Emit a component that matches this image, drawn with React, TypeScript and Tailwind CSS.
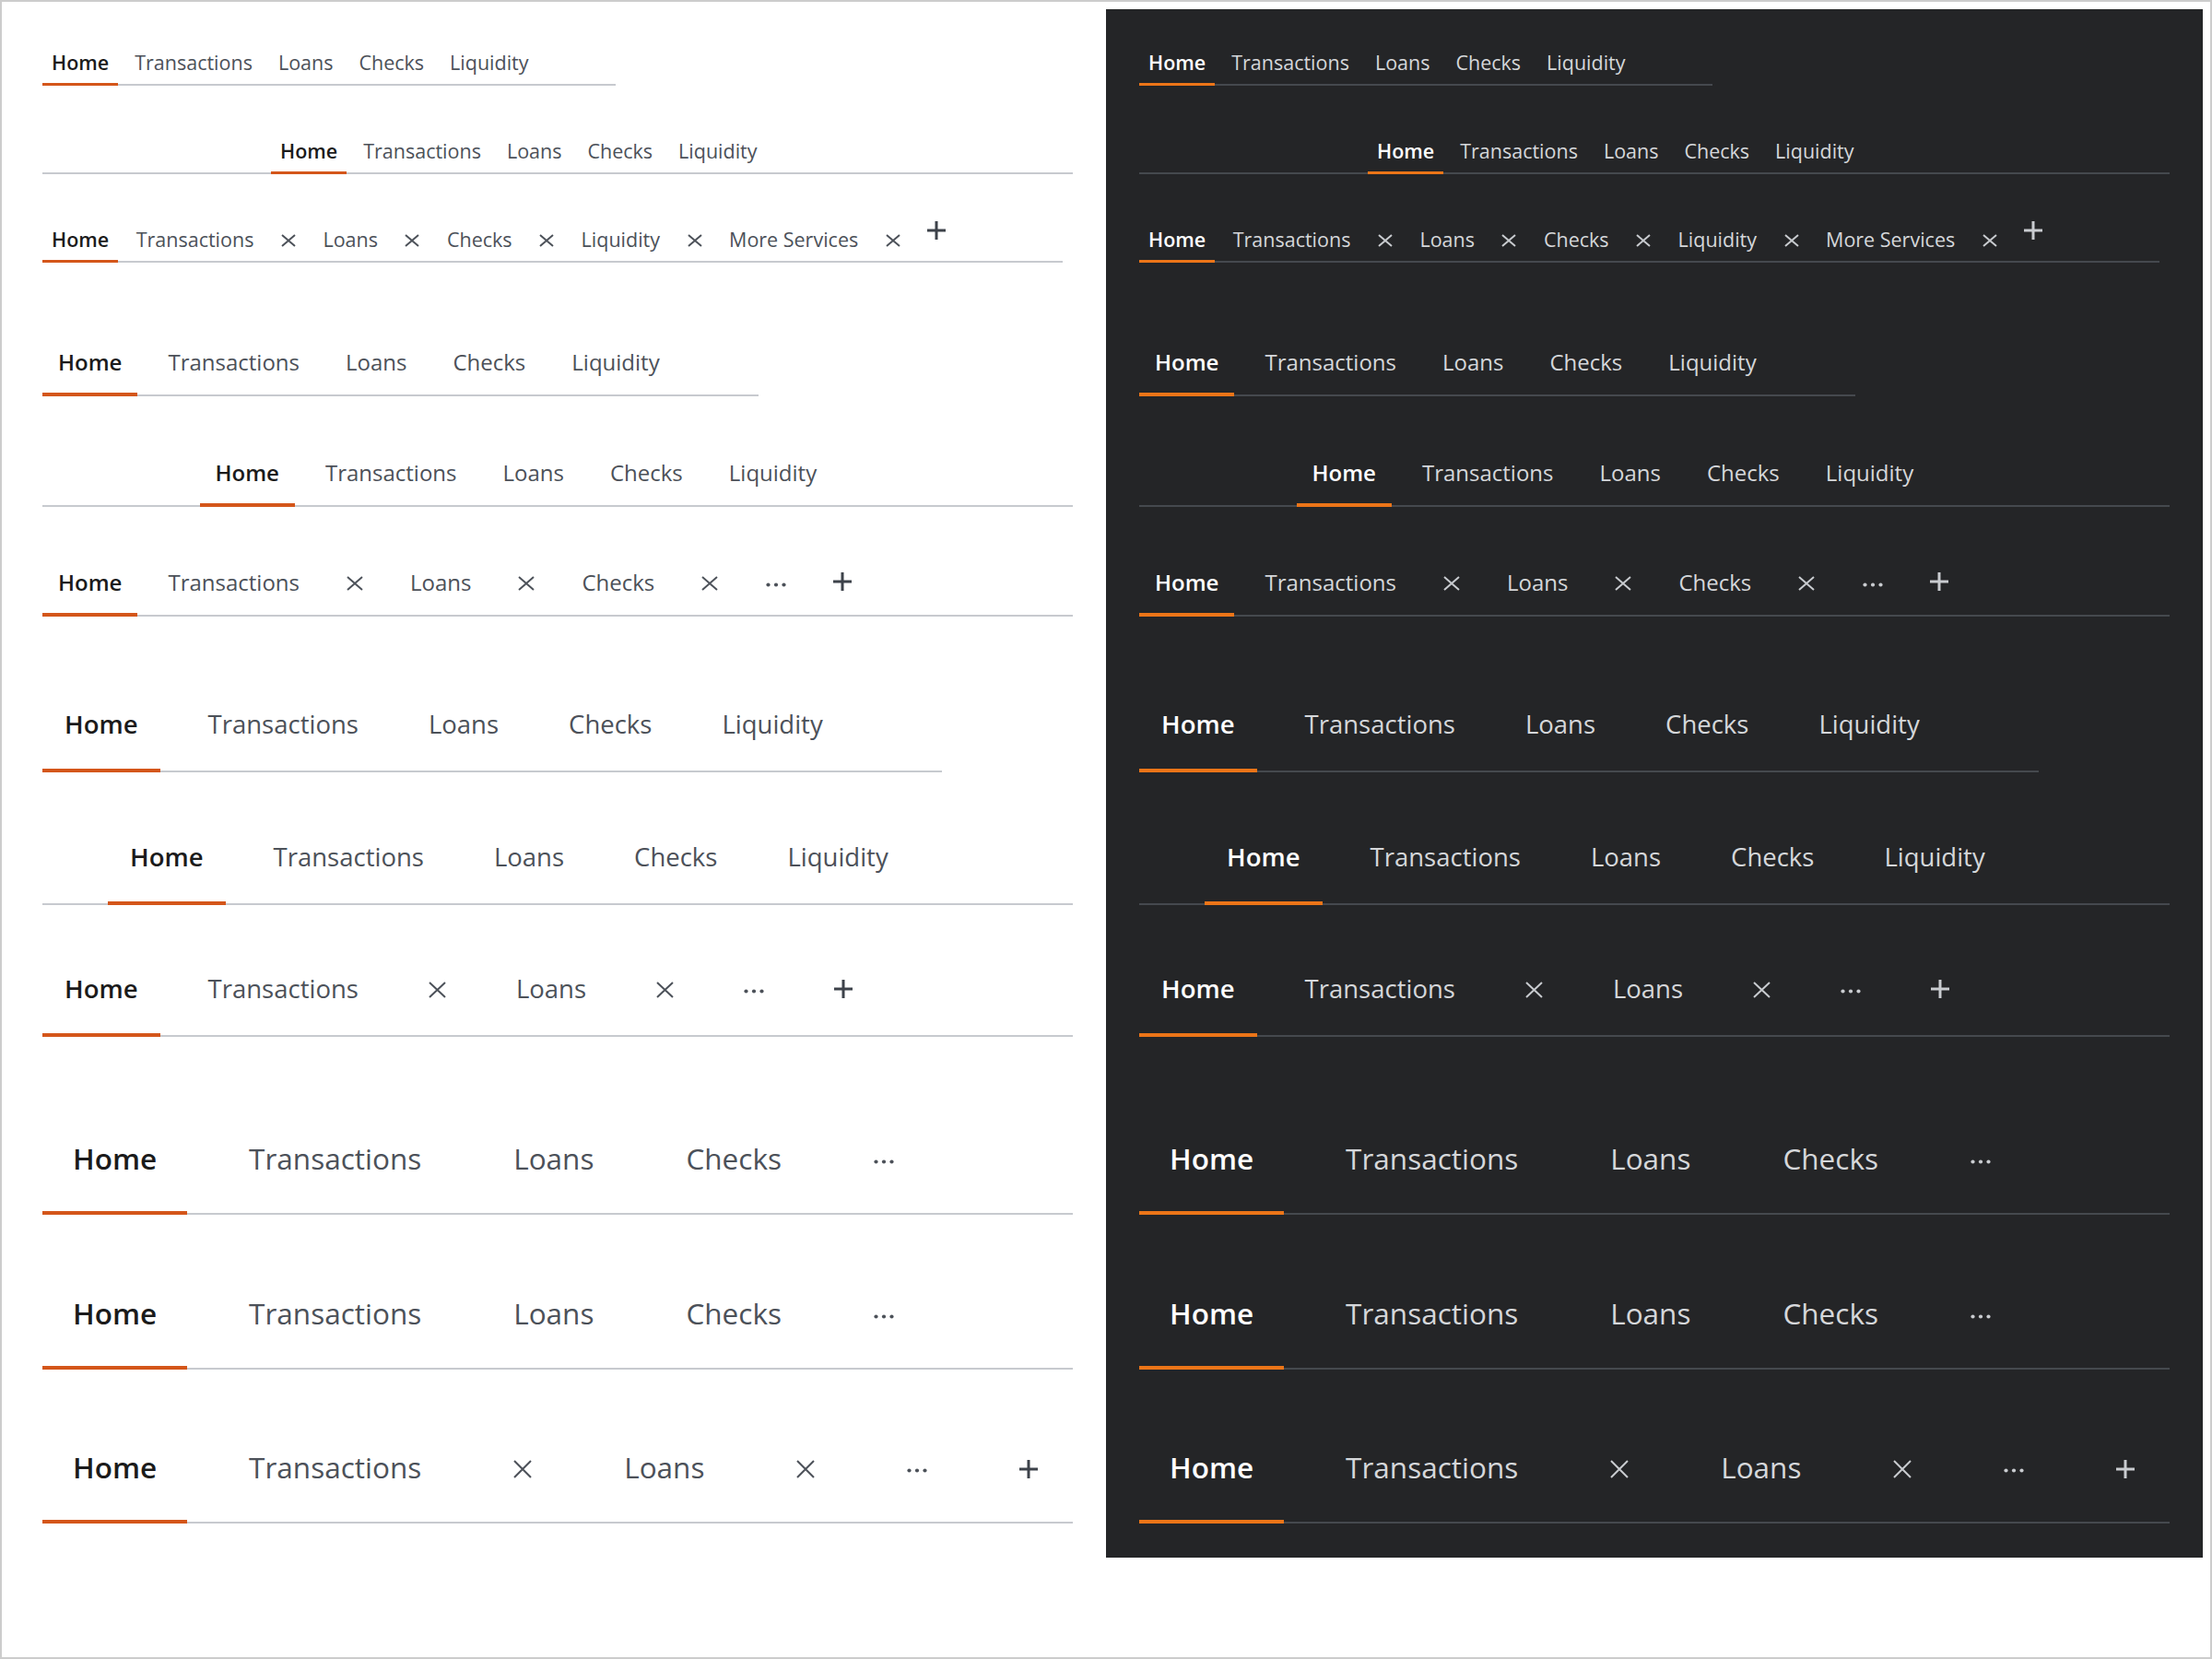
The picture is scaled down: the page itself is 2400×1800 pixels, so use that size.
import React from "react";

type Size = "sm" | "md" | "lg" | "xl";

type Item =
  | { kind: "tab"; label: string; active?: boolean }
  | { kind: "close" }
  | { kind: "more" }
  | { kind: "add"; raised?: boolean };

type Row = {
  size: Size;
  align: "left" | "center" | "full";
  width: string;
  gap: string;
  mt: string;
  items: Item[];
};

// box = vertical padding, underline, font size / line height per size
const SIZE: Record<
  Size,
  { box: string; pad: string; iconPad: string; close: [number, number]; dotsH: number }
> = {
  sm: {
    box: "pt-[8px] pb-[8px] border-b-[3px] -mb-[2px] text-[21.5px] leading-[28px]",
    pad: "px-[10px]",
    iconPad: "px-[10px]",
    close: [16, 14],
    dotsH: 11,
  },
  md: {
    box: "pt-[17px] pb-[17px] border-b-[4px] -mb-[2px] text-[24px] leading-[32px]",
    pad: "px-[17px]",
    iconPad: "px-[18px]",
    close: [18, 16],
    dotsH: 13,
  },
  lg: {
    box: "pt-[29px] pb-[29px] border-b-[4px] -mb-[2px] text-[27.5px] leading-[38px]",
    pad: "px-[24px]",
    iconPad: "px-[24px]",
    close: [19, 18],
    dotsH: 15,
  },
  xl: {
    box: "pt-[37px] pb-[36px] border-b-[4px] -mb-[2px] text-[31.5px] leading-[43px]",
    pad: "px-[33px]",
    iconPad: "px-[33px]",
    close: [20, 20],
    dotsH: 17,
  },
};

const BASIC: Item[] = [
  { kind: "tab", label: "Home", active: true },
  { kind: "tab", label: "Transactions" },
  { kind: "tab", label: "Loans" },
  { kind: "tab", label: "Checks" },
  { kind: "tab", label: "Liquidity" },
];

const ROWS: Row[] = [
  { size: "sm", align: "left", width: "w-[622px]", gap: "gap-[8px]", mt: "mt-0", items: BASIC },
  { size: "sm", align: "center", width: "w-[622px]", gap: "gap-[8px]", mt: "mt-[49px]", items: BASIC },
  {
    size: "sm",
    align: "left",
    width: "w-[1107px]",
    gap: "gap-[9.5px]",
    mt: "mt-[49px]",
    items: [
      { kind: "tab", label: "Home", active: true },
      { kind: "tab", label: "Transactions" },
      { kind: "close" },
      { kind: "tab", label: "Loans" },
      { kind: "close" },
      { kind: "tab", label: "Checks" },
      { kind: "close" },
      { kind: "tab", label: "Liquidity" },
      { kind: "close" },
      { kind: "tab", label: "More Services" },
      { kind: "close" },
      { kind: "add", raised: true },
    ],
  },
  { size: "md", align: "left", width: "w-[777px]", gap: "gap-[16px]", mt: "mt-[75px]", items: BASIC },
  { size: "md", align: "center", width: "w-[777px]", gap: "gap-[16px]", mt: "mt-[50px]", items: BASIC },
  {
    size: "md",
    align: "full",
    width: "w-full",
    gap: "gap-[16px]",
    mt: "mt-[49px]",
    items: [
      { kind: "tab", label: "Home", active: true },
      { kind: "tab", label: "Transactions" },
      { kind: "close" },
      { kind: "tab", label: "Loans" },
      { kind: "close" },
      { kind: "tab", label: "Checks" },
      { kind: "close" },
      { kind: "more" },
      { kind: "add" },
    ],
  },
  { size: "lg", align: "left", width: "w-[976px]", gap: "gap-[28px]", mt: "mt-[69px]", items: BASIC },
  { size: "lg", align: "center", width: "w-[976px]", gap: "gap-[28px]", mt: "mt-[44px]", items: BASIC },
  {
    size: "lg",
    align: "full",
    width: "w-full",
    gap: "gap-[28px]",
    mt: "mt-[43px]",
    items: [
      { kind: "tab", label: "Home", active: true },
      { kind: "tab", label: "Transactions" },
      { kind: "close" },
      { kind: "tab", label: "Loans" },
      { kind: "close" },
      { kind: "more" },
      { kind: "add" },
    ],
  },
  {
    size: "xl",
    align: "full",
    width: "w-full",
    gap: "gap-[34px]",
    mt: "mt-[73px]",
    items: [...BASIC.slice(0, 4), { kind: "more" }],
  },
  {
    size: "xl",
    align: "full",
    width: "w-full",
    gap: "gap-[34px]",
    mt: "mt-[48px]",
    items: [...BASIC.slice(0, 4), { kind: "more" }],
  },
  {
    size: "xl",
    align: "full",
    width: "w-full",
    gap: "gap-[34px]",
    mt: "mt-[47px]",
    items: [
      { kind: "tab", label: "Home", active: true },
      { kind: "tab", label: "Transactions" },
      { kind: "close" },
      { kind: "tab", label: "Loans" },
      { kind: "close" },
      { kind: "more" },
      { kind: "add" },
    ],
  },
];

function CloseIcon({ w, h }: { w: number; h: number }) {
  return (
    <svg width={w} height={h} viewBox={`0 0 ${w} ${h}`} className="inline-block align-baseline">
      <path d={`M1 1L${w - 1} ${h - 1}M${w - 1} 1L1 ${h - 1}`} stroke="currentColor" strokeWidth={2} fill="none" />
    </svg>
  );
}

function MoreIcon({ h }: { h: number }) {
  const cy = h / 2;
  return (
    <svg width={22} height={h} viewBox={`0 0 22 ${h}`} className="inline-block align-baseline">
      <circle cx={2.5} cy={cy} r={2.1} fill="currentColor" />
      <circle cx={11} cy={cy} r={2.1} fill="currentColor" />
      <circle cx={19.5} cy={cy} r={2.1} fill="currentColor" />
    </svg>
  );
}

function AddIcon({ raised }: { raised?: boolean }) {
  return (
    <svg
      width={20}
      height={20}
      viewBox="0 0 20 20"
      className={`inline-block align-baseline ${raised ? "-translate-y-2" : ""}`}
    >
      <path d="M10 0V20M0 10H20" stroke="currentColor" strokeWidth={3} fill="none" />
    </svg>
  );
}

function TabItem({ item, size, dark }: { item: Item; size: Size; dark: boolean }) {
  const s = SIZE[size];
  if (item.kind === "tab") {
    const cls = item.active
      ? `font-semibold ${dark ? "text-white border-[#ec7518]" : "text-[#1b1b1b] border-[#d4561a]"}`
      : `font-normal border-transparent ${dark ? "text-[#d5d7da]" : "text-[#4c5159]"}`;
    return (
      <button type="button" className={`${s.box} ${s.pad} whitespace-nowrap ${cls}`}>
        {item.label}
      </button>
    );
  }
  const iconColor = dark ? "text-[#c9ccd0]" : "text-[#4c5159]";
  if (item.kind === "close") {
    return (
      <button type="button" aria-label="Close" className={`${s.box} ${s.iconPad} border-transparent ${iconColor}`}>
        <CloseIcon w={s.close[0]} h={s.close[1]} />
      </button>
    );
  }
  if (item.kind === "more") {
    return (
      <button type="button" aria-label="More" className={`${s.box} ${s.iconPad} border-transparent ${iconColor}`}>
        <MoreIcon h={s.dotsH} />
      </button>
    );
  }
  return (
    <button
      type="button"
      aria-label="Add"
      className={`${s.box} ${s.pad} border-transparent ${dark ? "text-[#c9ccd0]" : "text-[#3d424a]"}`}
    >
      <AddIcon raised={item.raised} />
    </button>
  );
}

function TabRow({ row, dark }: { row: Row; dark: boolean }) {
  const line = dark ? "border-[#45494e]" : "border-[#c7cacf]";
  const items = row.items.map((it, i) => <TabItem key={i} item={it} size={row.size} dark={dark} />);

  if (row.align === "center") {
    return (
      <div className={`${row.mt} w-full border-b-2 ${line} flex justify-center`}>
        <div className={`${row.width} flex items-end ${row.gap}`}>{items}</div>
      </div>
    );
  }
  return <div className={`${row.mt} ${row.width} border-b-2 ${line} flex items-end ${row.gap}`}>{items}</div>;
}

function Panel({ dark }: { dark: boolean }) {
  return (
    <div
      className={`w-[1190px] h-[1680px] shrink-0 px-[36px] pt-[36px] flex flex-col ${
        dark ? "bg-[#242527]" : "bg-white"
      }`}
    >
      {ROWS.map((r, i) => (
        <TabRow key={i} row={r} dark={dark} />
      ))}
    </div>
  );
}

export default function App() {
  return (
    <div className="w-[2400px] h-[1800px] box-border border-2 border-[#cccccc] bg-white pl-[8px] pt-[8px] flex items-start font-['Open_Sans',sans-serif]">
      <Panel dark={false} />
      <Panel dark={true} />
    </div>
  );
}
